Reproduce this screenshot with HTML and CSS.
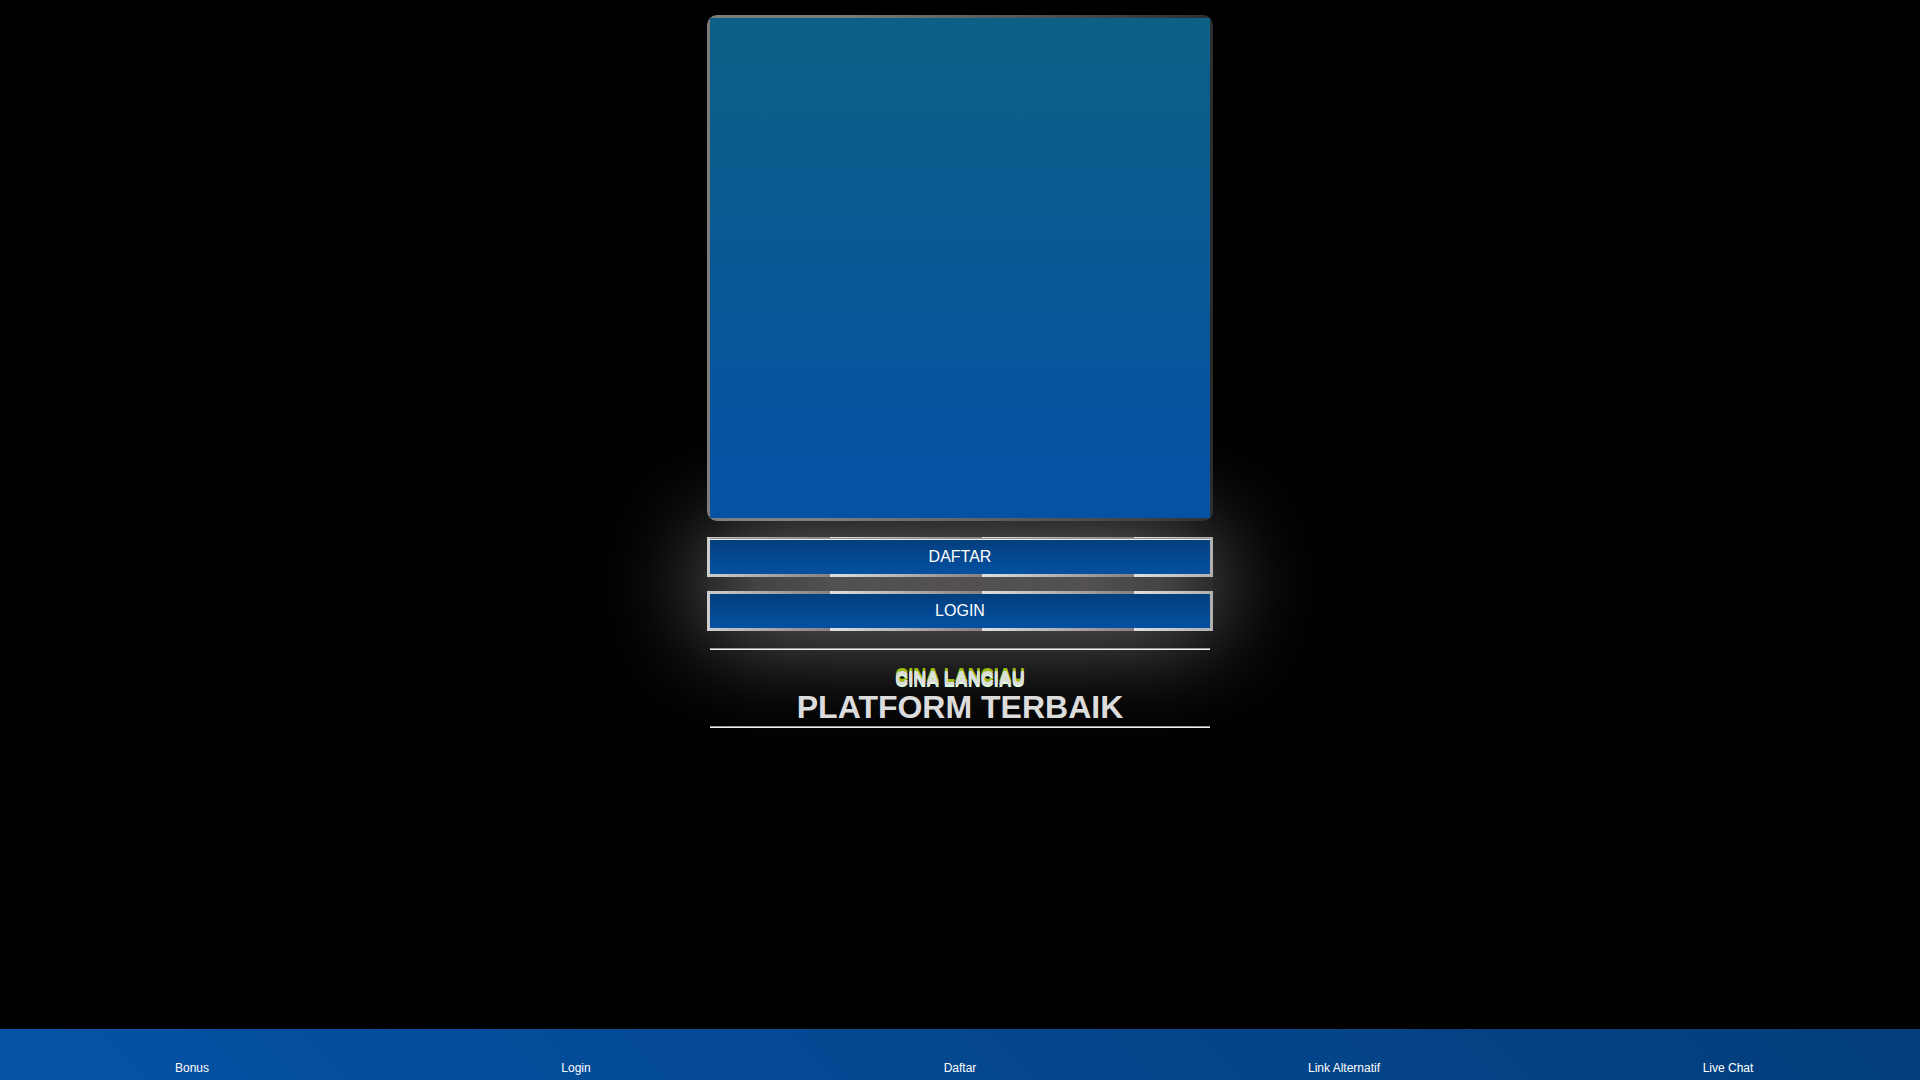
FILE: index.html
```html
<!DOCTYPE html>
<html lang="id">
<head>
<meta charset="utf-8">
<meta name="viewport" content="width=device-width, initial-scale=1">
<title>CINA LANCIAU</title>
<link rel="stylesheet" href="styles.css">
</head>
<body>
<main class="page">
  <div class="banner"><div class="banner-fill"></div></div>
  <div class="actions">
    <button class="action action-lined" type="button">DAFTAR</button>
    <button class="action" type="button">LOGIN</button>
  </div>
  <header class="headline">
    <hr class="rule">
    <p class="brand">CINA LANCIAU</p>
    <h1 class="title">PLATFORM TERBAIK</h1>
    <hr class="rule">
  </header>
</main>
<nav class="bottom-nav">
  <a class="nav-link" href="#bonus">Bonus</a>
  <a class="nav-link" href="#login">Login</a>
  <a class="nav-link" href="#daftar">Daftar</a>
  <a class="nav-link" href="#link-alternatif">Link Alternatif</a>
  <a class="nav-link" href="#live-chat">Live Chat</a>
</nav>
</body>
</html>
```
FILE: styles.css
```css
* {
  box-sizing: border-box;
}

body {
  margin: 0;
  min-height: 100vh;
  display: flex;
  flex-direction: column;
  background: #000;
  color: #fff;
  font-family: "Liberation Sans", Arial, sans-serif;
}

.page {
  flex: 1;
  width: 100%;
  max-width: 506px;
  margin: 0 auto;
  padding-top: 15px;
}

.banner {
  position: relative;
  z-index: 1;
  padding: 3px;
  border-radius: 10px;
  overflow: hidden;
  background: linear-gradient(93deg, rgba(140, 136, 136, 0.9) 25%, rgba(60, 60, 60, 0.7) 98%);
}

.banner-fill {
  aspect-ratio: 1;
  background: linear-gradient(#0d6085, #0551a3 92%);
}

.actions {
  display: grid;
  gap: 14px;
  margin-top: 16px;
  box-shadow: 0 0 104px rgba(255, 250, 250, 0.5);
  background: linear-gradient(90deg, #2b2b2b, #444 10%, #525050 25% 75%, #444 90%, #2b2b2b);
}

/* Blue face over a metallic strip that repeats along the border. */
.action {
  height: 40px;
  padding: 0;
  border: 3px solid transparent;
  background-image:
    linear-gradient(#033d7a, #0552a5),
    linear-gradient(90deg, #e0e0e0, #868080);
  background-origin: border-box;
  background-clip: padding-box, border-box;
  background-position: 0 0, -29px 0;
  background-size: auto, 152px 100%;
  color: #fff;
  font-family: inherit;
  font-size: 16px;
  line-height: 34px;
  cursor: pointer;
}

/* A thin rule runs along the top edge. */
.action-lined {
  background-image:
    linear-gradient(#8f8f8f 0 1px, #eee 1px),
    linear-gradient(#033d7a, #0552a5),
    linear-gradient(90deg, #e0e0e0, #868080);
  background-clip: border-box, padding-box, border-box;
  background-position: center 1px, 0 0, -29px 0;
  background-size: calc(100% - 6px) 2px, auto, 152px 100%;
  background-repeat: no-repeat, repeat, repeat;
}

.headline {
  position: relative;
  margin: 17px 3px 0;
  text-align: center;
}

.rule {
  margin: 0;
  border: solid;
  border-width: 1px 0;
  border-color: #999 transparent #eee;
}

.brand {
  margin: 18px 0 0;
  color: #dcdcdc;
  font-size: 18px;
  font-weight: bold;
  line-height: 20px;
  text-shadow: 0 1px #dcdcdc, 0 3px #dfd, 0 -3px #9b1, 0 -2px #9b1;
}

.title {
  margin: 0;
  padding: 2px 0;
  color: #dcdcdc;
  font-size: 32px;
  line-height: 34px;
}

.bottom-nav {
  display: grid;
  grid-template-columns: repeat(5, 1fr);
  padding: 31px 0 4px;
  background: linear-gradient(45deg, #0552a5, #033d7a);
}

.nav-link {
  color: #fff;
  font-size: 12px;
  line-height: 16px;
  text-align: center;
  text-decoration: none;
}
```
